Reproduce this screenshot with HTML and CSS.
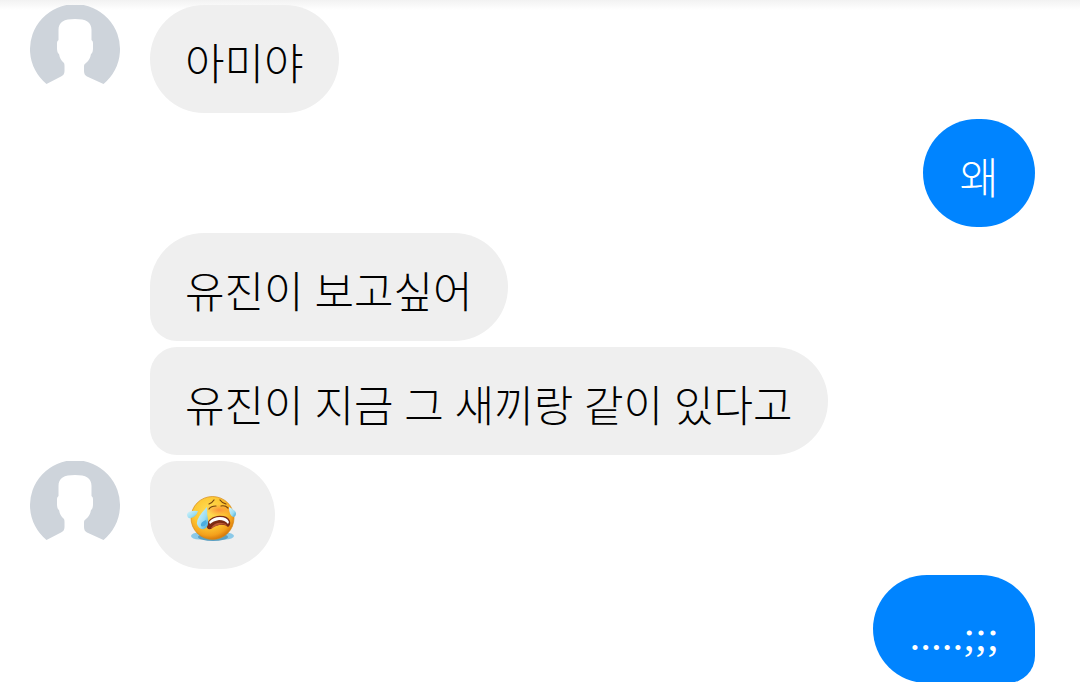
FILE: index.html
```
<!DOCTYPE html>
<html lang="ko">
<head>
<meta charset="utf-8">
<meta name="viewport" content="width=device-width, initial-scale=1">
<title>채팅</title>
<link rel="stylesheet" href="styles.css">
</head>
<body>
<svg class="defs" aria-hidden="true">
  <symbol id="person" viewBox="0 0 90 90">
    <path d="M16.5 79A45 45 0 1 1 73.500 79L57 71.500Q54 70 54 66V61Q54 59 56 58Q60 55 61 49Q63 48 63 43V38Q63 36 61.500 35V25C61.500 17 56 14 45 14C34 14 28.500 17 28.500 25V35Q27 36 27 38V43Q27 48 29 49Q30 55 34 58Q34.500 59 34.500 61V66Q34.500 70 31 71.500Z" fill="#ced4db"/>
  </symbol>
</svg>
<main class="chat">
  <div class="row">
    <svg class="avatar" role="img" aria-label="프로필"><use href="#person"/></svg>
    <p class="bubble">아미야</p>
  </div>
  <div class="row row-mine"><p class="bubble bubble-mine">왜</p></div>
  <div class="row row-plain"><p class="bubble joined-below">유진이 보고싶어</p></div>
  <div class="row row-plain"><p class="bubble joined-above joined-below">유진이 지금 그 새끼랑 같이 있다고</p></div>
  <div class="row">
    <svg class="avatar" role="img" aria-label="프로필"><use href="#person"/></svg>
    <div class="bubble joined-above">
      <svg class="emoji" viewBox="0 0 53 53" role="img" aria-label="엉엉 우는 얼굴">
        <defs>
          <radialGradient id="face" cx=".42" cy=".35" r=".65">
            <stop offset="0" stop-color="#ffdf58"/><stop offset=".55" stop-color="#fdc733"/><stop offset=".85" stop-color="#f4a11c"/><stop offset="1" stop-color="#d97b0c"/>
          </radialGradient>
          <radialGradient id="blush">
            <stop offset="0" stop-color="#fb7838" stop-opacity=".7"/><stop offset="1" stop-color="#fb8a38" stop-opacity="0"/>
          </radialGradient>
          <linearGradient id="tear" x1="0" y1="0" x2="1" y2="1">
            <stop offset="0" stop-color="#d8f5fc"/><stop offset=".6" stop-color="#9addf2"/><stop offset="1" stop-color="#3ba3d3"/>
          </linearGradient>
        </defs>
        <ellipse cx="13" cy="44" rx="8" ry="3.500" fill="#8bc9e8"/>
        <ellipse cx="39" cy="44" rx="9" ry="3.500" fill="#8bc9e8"/>
        <ellipse cx="27" cy="45" rx="15" ry="4" fill="#5a9fc2"/>
        <circle cx="26.500" cy="26" r="21.500" fill="url(#face)" stroke="#d58a16" stroke-width=".7"/>
        <ellipse cx="33" cy="18" rx="14" ry="6" fill="url(#blush)"/>
        <path d="M23 12Q26 11 28 8M34 8Q36 11 40 12M23 17Q25 14 30 14M35 14Q39 13 42 16" fill="none" stroke="#75430d" stroke-width="1.200" stroke-linecap="round"/>
        <path d="M21 33Q22 26 31 24Q42 23 44 29Q45 33 42 35Q39 32 33 33Q28 34 25 37Q20 38 21 33Z" fill="#7d2b12"/>
        <path d="M25 36Q29 30 36 31Q40 31 41 34Q38 31 33 33Q28 34 25 37Z" fill="#bb5634"/>
        <path d="M23 30Q27 25 34 25Q41 25 43 30L42 32Q39 28 33 28Q27 29 24 32Z" fill="#fff"/>
        <path d="M21 15Q10 26 11 32Q13 38 18 37Q23 35 22 28Q21 23 21 15Z" fill="url(#tear)"/>
        <path d="M20 28Q14 30 15 34Q18 36 21 31Z" fill="#4aade0"/>
        <path d="M12 19Q3 18 1 22Q1 27 5 26Q10 25 12 19Z" fill="url(#tear)"/>
        <path d="M43 15Q49 18 50 21Q50 25 47 25Q43 23 43 15Z" fill="url(#tear)"/>
      </svg>
    </div>
  </div>
  <div class="row row-mine"><p class="bubble bubble-mine mine-joined">.....;;;</p></div>
</main>
</body>
</html>
```
FILE: styles.css
```
html {
  scrollbar-width: none;
}

body {
  margin: 0;
  background: #fff;
  color: #000;
  font-family: "Liberation Serif", "Noto Sans CJK KR", serif;
  font-size: 43px;
  font-weight: 300;
  line-height: 60px;
}

.defs {
  display: block;
  width: 0;
  height: 0;
}

.chat {
  display: flex;
  flex-direction: column;
  gap: 6px;
  padding: 5px 45px 0 30px;
  background: linear-gradient(#f2f2f2, #fff 10px);
}

.row {
  display: flex;
  align-items: flex-start;
  gap: 30px;
}

.row-mine {
  justify-content: flex-end;
}

.row-plain {
  padding-left: 120px;
}

.avatar {
  flex: none;
  width: 90px;
  height: 90px;
}

.bubble {
  box-sizing: border-box;
  min-height: 108px;
  margin: 0;
  padding: 31px 35px 17px;
  border-radius: 54px;
  background: #efefef;
}

.bubble-mine {
  padding-left: 36px;
  padding-right: 36px;
  background: #0084ff;
  color: #fff;
}

.joined-above {
  border-top-left-radius: 27px;
}

.joined-below {
  border-bottom-left-radius: 27px;
}

.mine-joined {
  border-bottom-right-radius: 27px;
}

.emoji {
  display: block;
  width: 55px;
  height: 53px;
}
```
